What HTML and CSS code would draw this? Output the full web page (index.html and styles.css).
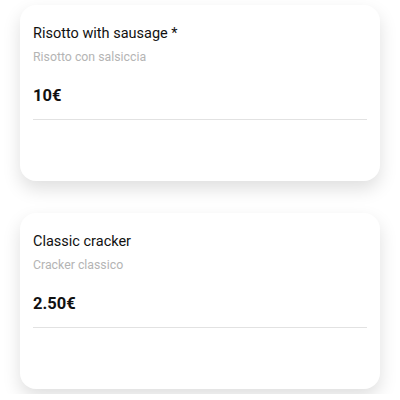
FILE: index.html
```html
<!doctype html>
<html>
<head>
    <meta charset="UTF-8">
    <title>Menu</title>
    <link rel="stylesheet" href="styles.css">
</head>
<body>
    <div class="list">
        <div class="card">
            <div class="name">Risotto with sausage *</div>
            <div class="alt">Risotto con salsiccia</div>
            <div class="price">10€</div>
            <hr class="line">
        </div>
        <div class="card">
            <div class="name">Classic cracker</div>
            <div class="alt">Cracker classico</div>
            <div class="price">2.50€</div>
            <hr class="line">
        </div>
    </div>
</body>
</html>
```

FILE: styles.css
```css
body {
    font-family: Roboto, "Liberation Sans", sans-serif;
    margin: 0;
    padding: 5px 20px;
    background-color: #fff;
}
.list {
    display: flex;
    flex-direction: column;
    gap: 32px;
}
.card {
    height: 176px;
    box-sizing: border-box;
    padding: 19px 13px 0;
    background-color: #fff;
    border-radius: 16px;
    box-shadow: 0 8px 18px rgba(0, 0, 0, 0.13);
}
.name {
    font-size: 14.5px;
    line-height: 20px;
    color: #111;
}
.alt {
    margin-top: 4px;
    font-size: 12.3px;
    line-height: 18px;
    color: #b4b4b4;
}
.price {
    margin-top: 19px;
    font-size: 16.5px;
    font-weight: bold;
    line-height: 22px;
    color: #111;
}
.line {
    margin: 12px 0 0;
    border: none;
    border-top: 1px solid #e2e2e2;
}
```
